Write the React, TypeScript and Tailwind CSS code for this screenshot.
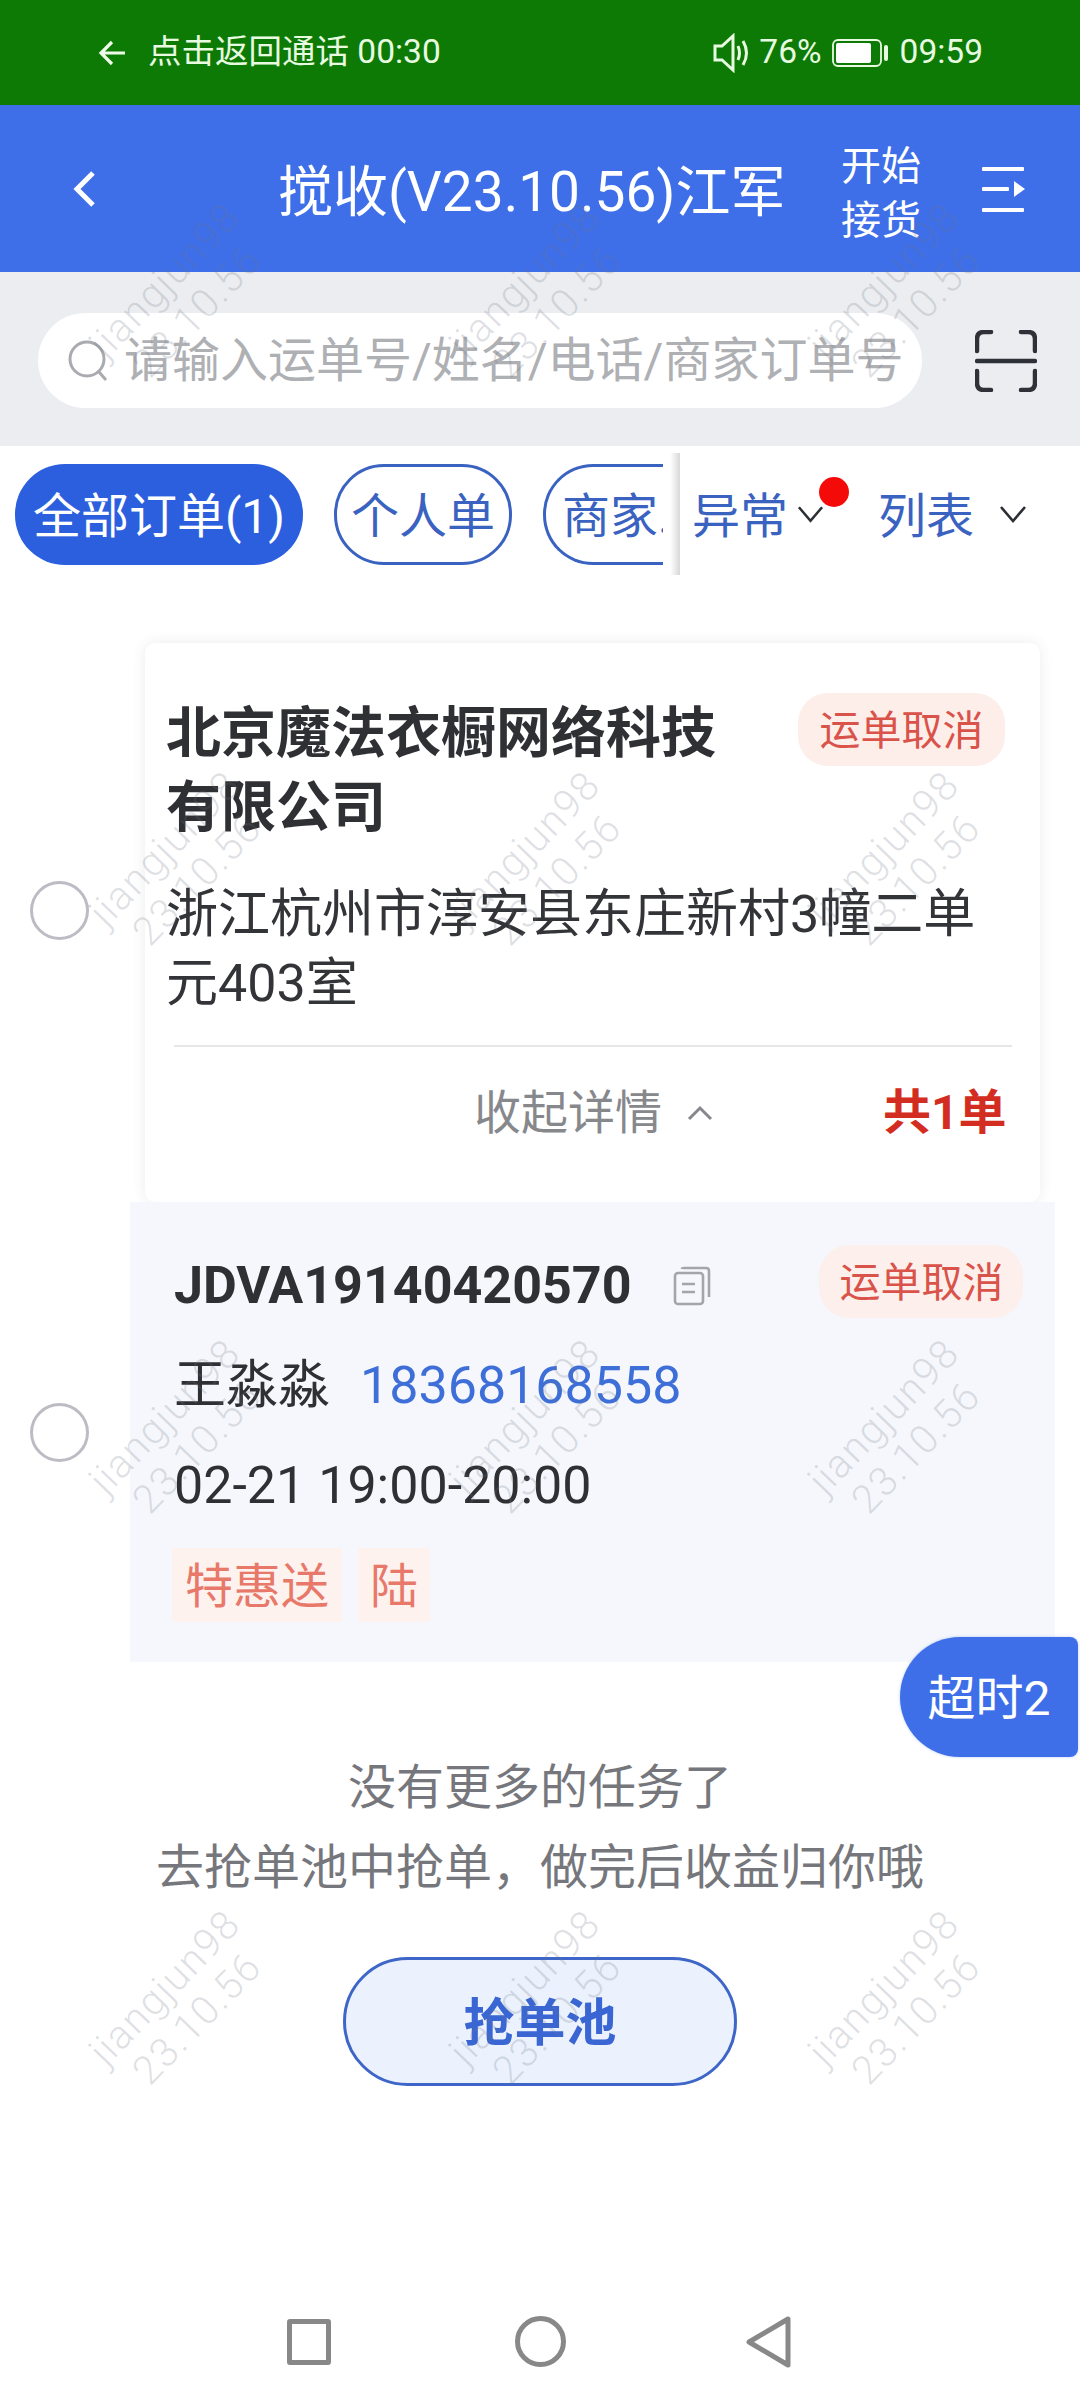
import React from "react";

const marksY = [296, 864, 1432, 2003];
const marksX = [181, 541, 900];

function Chevron({ className }: { className?: string }) {
  return (
    <svg className={className} viewBox="0 0 28 18" fill="none" stroke="#2b2f36" strokeWidth="2.6">
      <path d="M2 2 L14 16 L26 2" />
    </svg>
  );
}

function StatusBadge({ className }: { className?: string }) {
  return (
    <div className={`flex items-center justify-center rounded-[30px] bg-[#fdeeea] pt-[3px] text-[41px] leading-none text-[#d9534a] ${className ?? ""}`}>
      运单取消
    </div>
  );
}

function Radio({ className }: { className?: string }) {
  return <div className={`h-[59px] w-[59px] shrink-0 rounded-full border-[3px] border-[#bcbcc4] bg-white ${className ?? ""}`} />;
}

export default function App() {
  return (
    <div
      className="relative h-[2400px] w-[1080px] overflow-hidden bg-white"
      style={{ fontFamily: 'Roboto, "Noto Sans CJK SC", sans-serif' }}
    >
      {/* status bar */}
      <div className="flex h-[105px] items-center justify-between bg-[#0c7a05] pl-[98px] pr-[97px] text-[33.5px] text-[#e8fbe0]">
        <div className="flex items-center">
          <svg width="28" height="26" viewBox="0 0 28 26" fill="none" stroke="#eefbe8" strokeWidth="3.2">
            <path d="M14 2 L3 13 L14 24 M3 13 H27" />
          </svg>
          <span className="ml-[22px]">点击返回通话 00:30</span>
        </div>
        <div className="flex items-center">
          <svg width="38" height="40" viewBox="0 0 38 40" fill="none" stroke="#e8fbe0" strokeWidth="3">
            <path d="M2 13 H9 L20 3 V37 L9 27 H2 Z" />
            <path d="M25 13 Q28 20 25 27 M30 8 Q37 20 30 32" />
          </svg>
          <span className="ml-[8px]">76%</span>
          <svg className="ml-[10px]" width="57" height="28" viewBox="0 0 57 28" fill="none">
            <rect x="1" y="1" width="48" height="26" rx="5" stroke="#e8fbe0" strokeWidth="1.8" />
            <rect x="4" y="4" width="35" height="20" rx="2" fill="#ffffff" />
            <rect x="52" y="6" width="4" height="16" rx="2" fill="#e8fbe0" />
          </svg>
          <span className="ml-[11px]">09:59</span>
        </div>
      </div>

      {/* header */}
      <div className="flex h-[167px] items-center bg-[#3e6fe8] text-white">
        <svg className="ml-[72px] shrink-0" width="24" height="38" viewBox="0 0 24 38" fill="none" stroke="#ffffff" strokeWidth="5">
          <path d="M21 3 L5 19 L21 35" />
        </svg>
        <div className="ml-[182px] w-[520px] whitespace-nowrap pt-[8px] text-[55px] leading-none">搅收(V23.10.56)江军</div>
        <div className="ml-[43px] w-[80px] pt-[10px] text-[40px] leading-[54px]">
          开始
          <br />
          接货
        </div>
        <svg className="ml-[61px]" width="44" height="46" viewBox="0 0 44 46" fill="#ffffff">
          <rect x="0" y="1" width="42" height="4" rx="1" />
          <rect x="0" y="21" width="27" height="4" rx="1" />
          <path d="M32 15 L43 23 L32 31 Z" />
          <rect x="0" y="42" width="42" height="4" rx="1" />
        </svg>
      </div>

      {/* search */}
      <div className="flex h-[174px] items-start bg-[#ebedf0] pl-[38px] pt-[41px]">
        <div className="flex h-[95px] w-[884px] items-center rounded-full bg-white pl-[30px]">
          <svg width="42" height="44" viewBox="0 0 42 44" fill="none" stroke="#a9abb0" strokeWidth="3">
            <circle cx="19" cy="20" r="17" />
            <path d="M31 33 L38 41" />
          </svg>
          <span className="ml-[14px] whitespace-nowrap text-[48px] leading-none text-[#aeb0b4]">请输入运单号/姓名/电话/商家订单号</span>
        </div>
        <svg className="ml-[53px] mt-[17px]" width="62" height="62" viewBox="0 0 62 62" fill="none" stroke="#2e3238" strokeWidth="4.5" strokeLinecap="round">
          <path d="M2 21 V9 Q2 2 9 2 H16 M46 2 H53 Q60 2 60 9 V21" />
          <path d="M2 31 H60" />
          <path d="M2 41 V53 Q2 60 9 60 H16 M46 60 H53 Q60 60 60 53 V41" />
        </svg>
      </div>

      {/* filter row */}
      <div className="relative flex h-[134px] items-center pl-[15px] pt-[2px] text-[48px] leading-none">
        <div className="flex h-[101px] w-[288px] items-center justify-center rounded-[50px] bg-[#2b5fde] pt-[5px] text-white">全部订单(1)</div>
        <div className="ml-[31px] flex h-[101px] w-[178px] items-center justify-center rounded-[50px] border-[3px] border-[#3a62c0] pt-[5px] text-[#3a62c0]">个人单</div>
        <div className="ml-[31px] flex h-[101px] w-[120px] items-center overflow-hidden rounded-l-[50px] border-y-[3px] border-l-[3px] border-[#3a62c0] pl-[16px] pt-[5px] text-[#3a62c0]">
          <span className="whitespace-nowrap">商家..</span>
        </div>
        <div className="ml-[7px] h-[122px] w-[10px] bg-gradient-to-r from-white to-[#d8d8d8]" />
        <span className="ml-[12px] pt-[5px] text-[#3a62c0]">异常</span>
        <Chevron className="ml-[9px] h-[18px] w-[27px]" />
        <div className="absolute left-[819px] top-[31px] h-[30px] w-[30px] rounded-full bg-[#f50a0a]" />
        <span className="ml-[54px] pt-[5px] text-[#3a62c0]">列表</span>
        <Chevron className="ml-[25px] h-[18px] w-[28px]" />
      </div>

      {/* order card */}
      <div className="mt-[63px] flex items-center pl-[30px]">
        <Radio className="mb-[24px]" />
        <div className="ml-[56px] flex h-[559px] w-[895px] flex-col rounded-[10px] bg-white shadow-[0_0_14px_rgba(60,70,90,0.10)]">
          <div className="flex items-start justify-between pl-[21px] pr-[35px] pt-[53px]">
            <div className="w-[580px] text-[55px] font-bold leading-[74px] text-[#2f3033]">北京魔法衣橱网络科技有限公司</div>
            <StatusBadge className="-mt-[3px] h-[73px] w-[207px]" />
          </div>
          <div className="mt-[36px] pl-[21px] pr-[40px] text-[52px] leading-[69px] text-[#333438]">浙江杭州市淳安县东庄新村3幢二单元403室</div>
          <div className="ml-[29px] mt-[27px] flex h-[130px] w-[838px] items-center border-t-2 border-[#e6e6e8] pt-[3px]">
            <span className="ml-[300px] text-[47px] leading-none text-[#87888c]">收起详情</span>
            <svg className="ml-[25px]" width="26" height="16" viewBox="0 0 26 16" fill="none" stroke="#87888c" strokeWidth="3">
              <path d="M2 14 L13 3 L24 14" />
            </svg>
            <span className="ml-[170px] text-[48px] font-bold leading-none text-[#d32c20]">共1单</span>
          </div>
        </div>
      </div>

      {/* waybill */}
      <div className="flex items-center pl-[30px]">
        <Radio />
        <div className="ml-[41px] h-[460px] w-[925px] bg-[#f5f7fc] pl-[44px]">
          <div className="flex h-[116px] items-end">
            <div className="flex h-[73px] items-center pt-[8px]">
              <span className="text-[52px] font-bold leading-none text-[#2f3033]">JDVA19140420570</span>
              <svg className="ml-[42px]" width="38" height="40" viewBox="0 0 38 40" fill="none" stroke="#a3a5aa" strokeWidth="2.6">
                <rect x="2" y="7" width="28" height="31" rx="3" />
                <path d="M9 3 Q9 2 11 2 H33 Q36 2 36 5 V31" />
                <path d="M9 18 H22 M9 26 H22" />
              </svg>
            </div>
            <StatusBadge className="ml-[108px] h-[73px] w-[204px] bg-[#fdf0ec]" />
          </div>
          <div className="mt-[32px] flex h-[72px] items-center text-[52px] leading-none">
            <span className="text-[#2f3033]">王淼淼</span>
            <span className="ml-[30px] text-[#3e6fd8]">18368168558</span>
          </div>
          <div className="mt-[28px] h-[72px] text-[52px] leading-[72px] text-[#2f3033]">02-21 19:00-20:00</div>
          <div className="ml-[-2px] mt-[26px] flex text-[48px] leading-none text-[#e8796a]">
            <div className="flex h-[74px] w-[170px] items-center justify-center bg-[#fdf2ee] pt-[4px]">特惠送</div>
            <div className="ml-[16px] flex h-[74px] w-[72px] items-center justify-center bg-[#fdf2ee] pt-[4px]">陆</div>
          </div>
        </div>
      </div>

      {/* empty state */}
      <div className="mt-[86px] text-center text-[48px] leading-[80px] text-[#76777c]">
        <div>没有更多的任务了</div>
        <div>去抢单池中抢单，做完后收益归你哦</div>
      </div>
      <div className="ml-[343px] mt-[49px] flex h-[129px] w-[394px] items-center justify-center rounded-[65px] border-[3px] border-[#3e66c8] bg-[#ebf2fd] pt-[3px] text-[51px] font-bold leading-none text-[#3a66d4]">
        抢单池
      </div>

      {/* nav bar */}
      <div className="mt-[233px] flex items-start pl-[287px]">
        <div className="h-[46px] w-[44px] rounded-[3px] border-[5px] border-[#888888]" />
        <div className="ml-[184px] mt-[-3px] h-[51px] w-[51px] rounded-full border-[5px] border-[#888888]" />
        <svg className="ml-[180px] mt-[-3px]" width="46" height="52" viewBox="0 0 46 52" fill="none" stroke="#888888" strokeWidth="5" strokeLinejoin="round">
          <path d="M42 3 V49 L3 26 Z" />
        </svg>
      </div>

      {/* floating badge */}
      <div className="absolute left-[900px] top-[1637px] flex h-[120px] w-[178px] items-center justify-center rounded-l-[60px] rounded-br-[8px] rounded-tr-[8px] bg-[#3e6fe8] pt-[4px] text-[48px] leading-none text-white shadow-[0_0_3px_rgba(60,110,230,0.35)]">
        超时2
      </div>

      {/* watermark */}
      {marksY.map((y) =>
        marksX.map((x) => (
          <div
            key={`${x}-${y}`}
            className="pointer-events-none absolute h-[90px] w-[280px] -rotate-[46deg] text-center text-[40px] font-light leading-[45px] tracking-[1.5px] text-[rgba(110,115,130,0.22)]"
            style={{ left: x - 140, top: y - 45 }}
          >
            <div>jiangjun98</div>
            <div>23.10.56</div>
          </div>
        ))
      )}
    </div>
  );
}
